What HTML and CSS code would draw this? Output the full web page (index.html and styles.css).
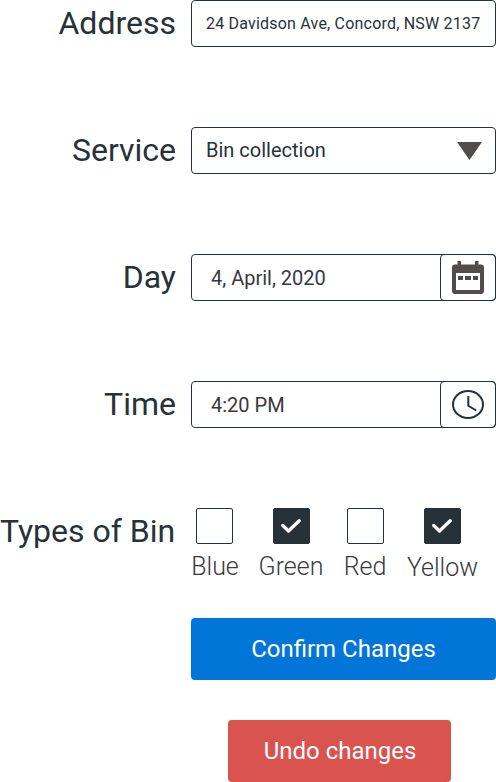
FILE: index.html
```html
<!DOCTYPE html>
<html lang="en">
<head>
<meta charset="utf-8">
<title>Booking</title>
<link rel="stylesheet" href="styles.css">
</head>
<body>
<form class="form">
  <div class="row">
    <label class="label">Address</label>
    <div class="field address"><span>24 Davidson Ave, Concord, NSW 2137</span></div>
  </div>
  <div class="row">
    <label class="label">Service</label>
    <div class="field service"><span>Bin collection</span>
      <svg class="arrow" width="25" height="18" viewBox="0 0 25 18"><path d="M0 0H25L12.500 18Z" fill="#524d4c"/></svg>
    </div>
  </div>
  <div class="row">
    <label class="label">Day</label>
    <div class="field picker"><span>4, April, 2020</span>
      <div class="addon"><svg width="32" height="33" viewBox="0 0 32 33"><path fill="#524d4c" fill-rule="evenodd" d="M5.500 0H9v3.500h14V0h3.500v3.500H29a3 3 0 0 1 3 3V30a3 3 0 0 1-3 3H3a3 3 0 0 1-3-3V6.500a3 3 0 0 1 3-3h2.500zM4 12v17h24V12zM6 15h5v4H6zm7 0h6v4h-6zm8 0h5v4h-5z"/></svg></div>
    </div>
  </div>
  <div class="row">
    <label class="label">Time</label>
    <div class="field picker"><span>4:20 PM</span>
      <div class="addon"><svg width="32" height="29" viewBox="0 0 32 29" fill="none" stroke="#263238" stroke-width="2"><ellipse cx="16" cy="14.500" rx="15" ry="13.500"/><path d="M16.300 6v9.800l8 4.700"/></svg></div>
    </div>
  </div>
  <div class="row bins-row">
    <label class="label">Types of Bin</label>
    <div class="bins">
      <div class="bin blue"><i class="box"></i><span>Blue</span></div>
      <div class="bin green"><i class="box on"><svg width="20" height="14" viewBox="0 0 20 14"><path d="M1.800 6.500L7.500 12L18.200 1.800"/></svg></i><span>Green</span></div>
      <div class="bin red"><i class="box"></i><span>Red</span></div>
      <div class="bin yellow"><i class="box on"><svg width="20" height="14" viewBox="0 0 20 14"><path d="M1.800 6.500L7.500 12L18.200 1.800"/></svg></i><span>Yellow</span></div>
    </div>
  </div>
  <button type="button" class="btn confirm">Confirm Changes</button>
  <button type="button" class="btn undo">Undo changes</button>
</form>
</body>
</html>
```
FILE: styles.css
```css
* { box-sizing: border-box; }
body { margin: 0; background: #fff; color: #263238; font-family: Roboto, sans-serif; overflow: hidden; }
.form { width: 496px; height: 782px; display: flex; flex-direction: column; }
.row { display: grid; grid-template-columns: 176px 305px; column-gap: 15px; height: 47px; margin-bottom: 80px; }
.label { font-size: 32px; line-height: 46px; text-align: right; white-space: nowrap; }
.field { display: flex; align-items: center; justify-content: space-between; height: 47px; border: 1px solid #263238; border-radius: 4px; padding-left: 14px; font-size: 20px; white-space: nowrap; }
.address { font-size: 16px; letter-spacing: 0.2px; }
.service { padding-right: 13px; }
.service span { margin-bottom: 2px; }
.arrow { margin-top: 1px; }
.picker { padding-left: 19px; color: #39393d; }
.picker span { padding-top: 1px; }
.addon { width: 56px; height: 47px; margin: -1px -1px -1px 0; border: 1px solid #263238; border-radius: 4px; display: flex; flex: none; align-items: center; justify-content: center; }
.bins-row { height: 73px; margin-bottom: 37px; }
.bins-row .label { padding-right: 1px; }
.bins { display: flex; }
.bin { display: flex; flex-direction: column; align-items: center; color: #39393d; font-size: 25px; font-weight: 300; line-height: 30px; }
.blue { width: 48px; }
.blue .box { margin-right: 1px; }
.green { width: 64px; margin-left: 20px; }
.red { width: 42px; margin-left: 21px; }
.yellow { width: 71px; margin-left: 21px; }
.yellow .box { margin-bottom: 9px; }
.box { width: 37px; height: 36px; border: 1px solid #263238; border-radius: 2px; margin-bottom: 8px; display: flex; flex: none; align-items: center; justify-content: center; }
.on { background: #263238; }
.box svg { fill: none; stroke: #fff; stroke-width: 3.3; stroke-linecap: round; stroke-linejoin: round; }
.yellow svg { margin-right: 1px; }
.btn { border: 0; border-radius: 4px; height: 62px; color: #fff; font: 400 24px Roboto, sans-serif; padding: 0; flex: none; }
.confirm { width: 305px; margin-left: 191px; background: #0275d8; }
.undo { width: 223px; margin: 40px 0 0 228px; padding-left: 1px; background: #d9534f; }
```
